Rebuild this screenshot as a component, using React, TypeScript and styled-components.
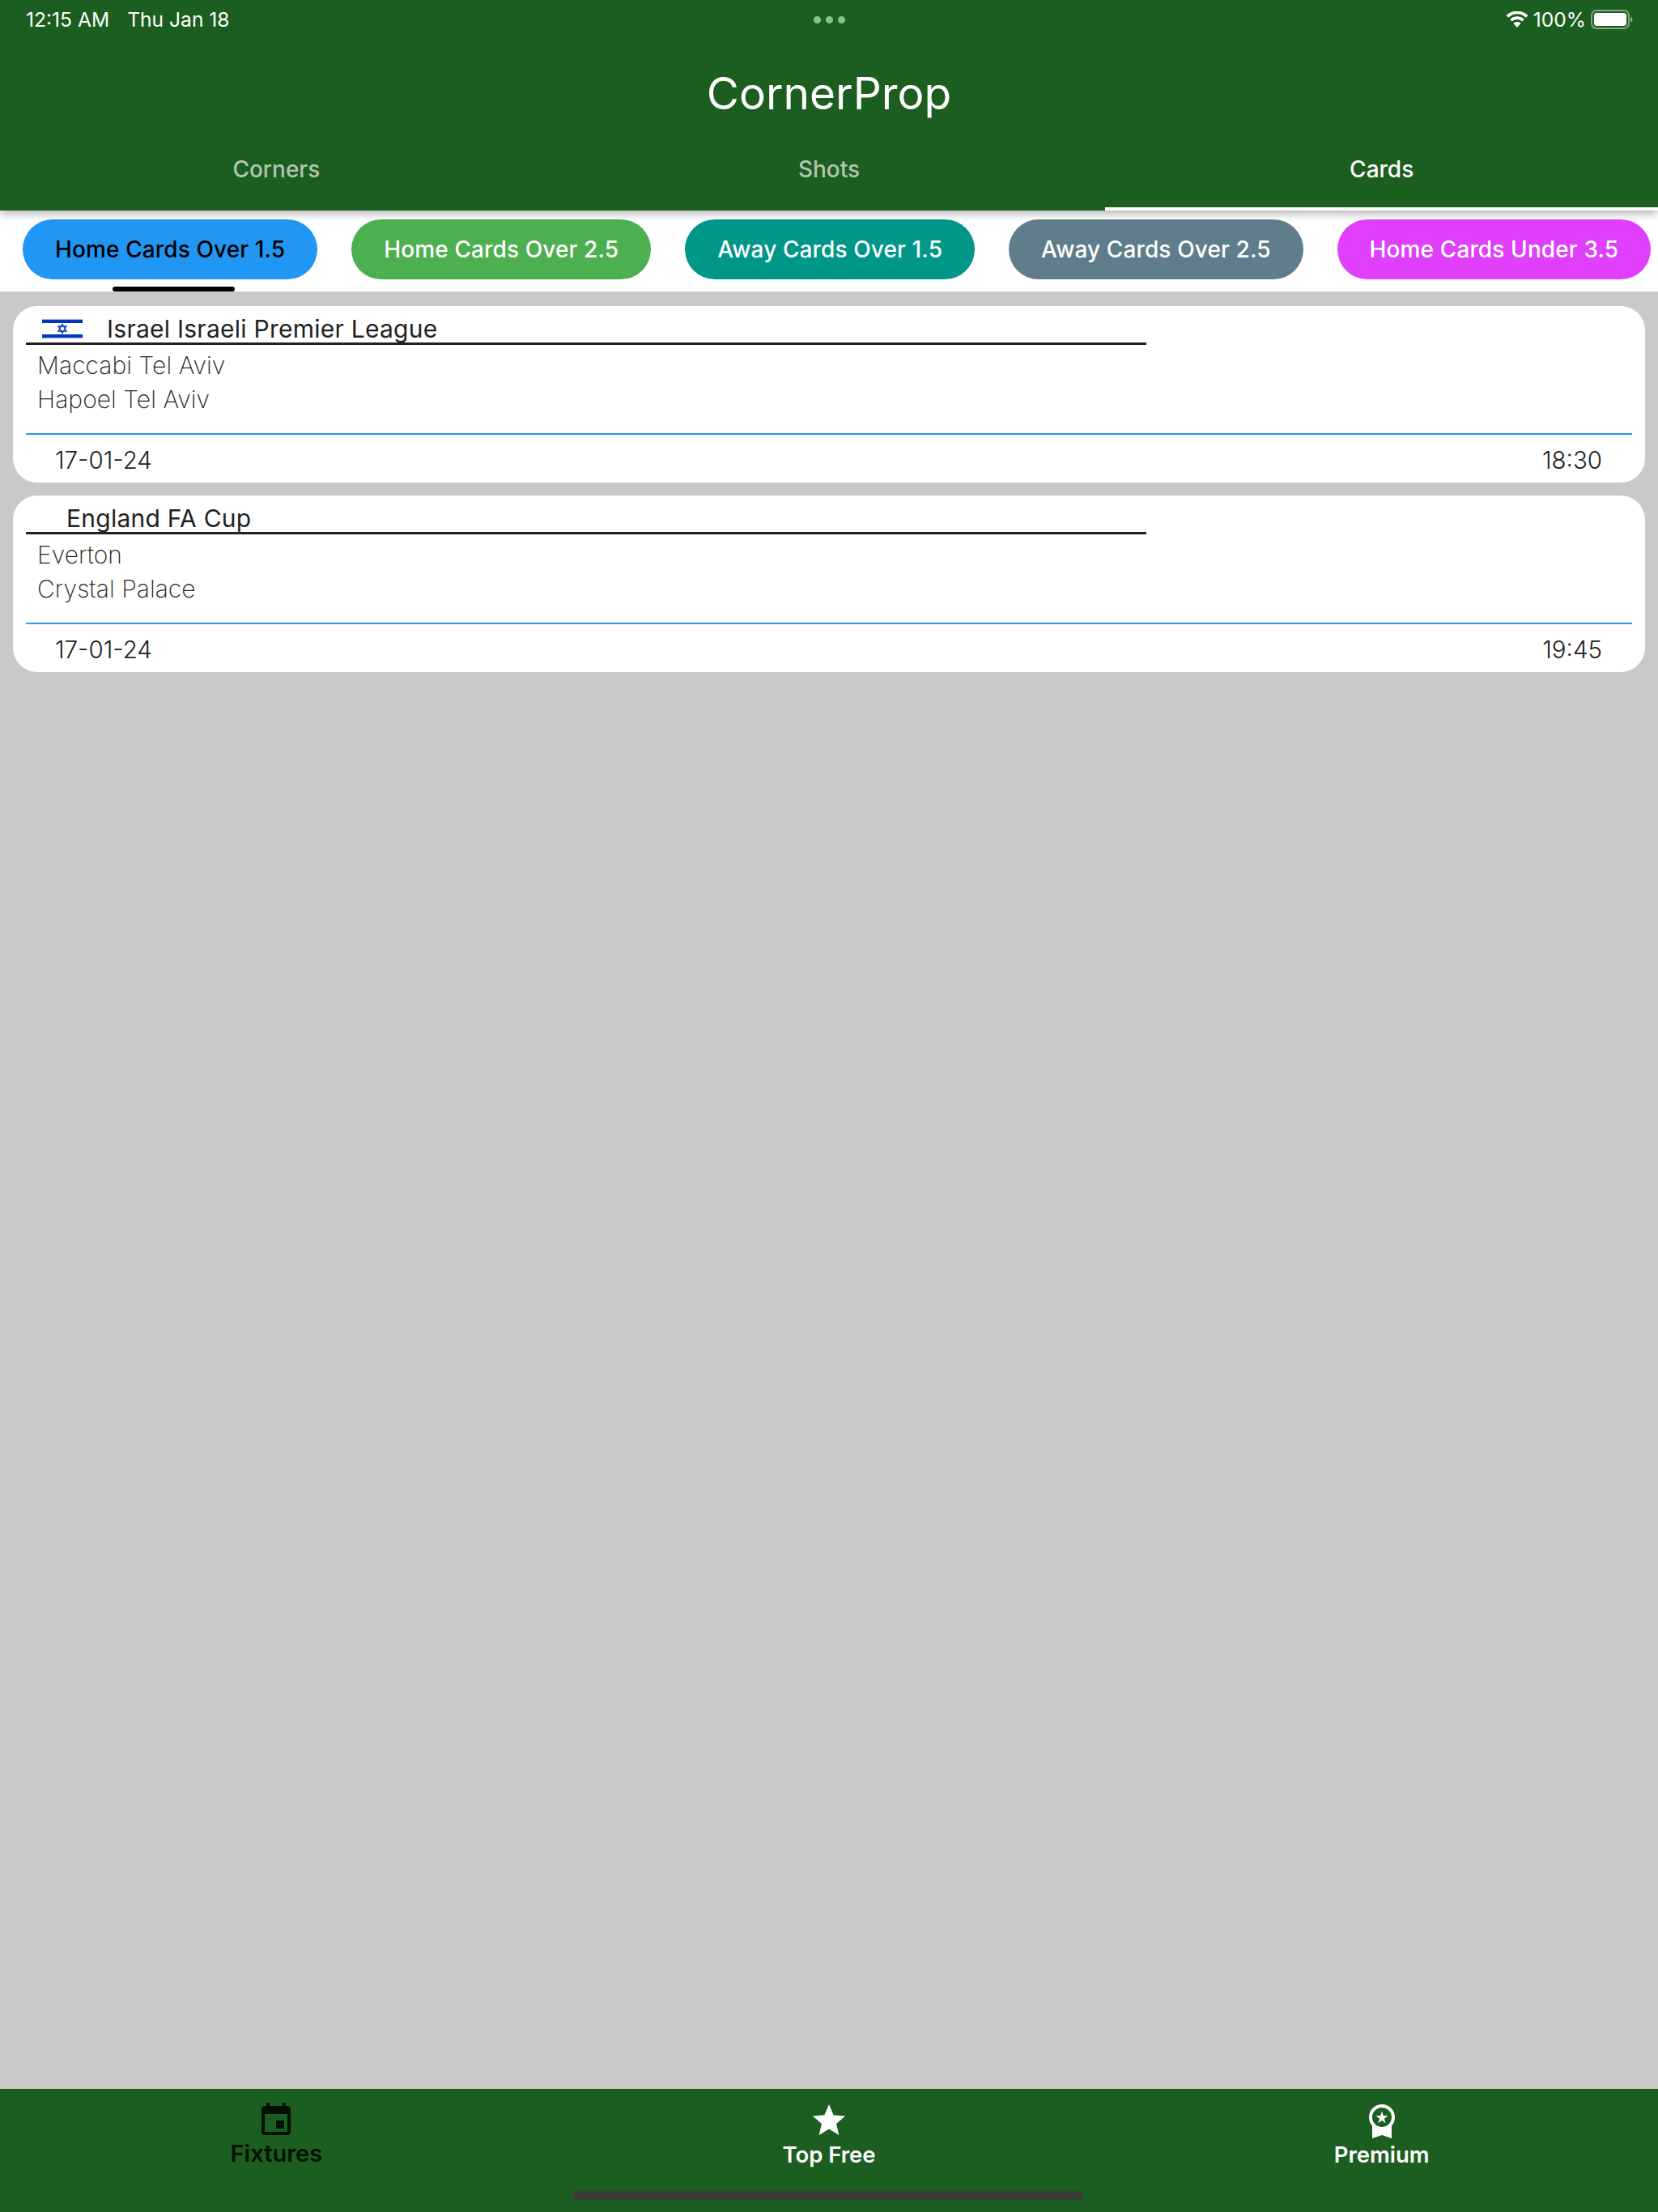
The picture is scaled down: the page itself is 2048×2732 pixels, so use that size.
import React from "react";
import styled, { createGlobalStyle } from "styled-components";
import { MdEvent, MdStar, MdWorkspacePremium } from "react-icons/md";

const GlobalStyle = createGlobalStyle`
  html, body { margin: 0; padding: 0; background: #c9c9c9; }
  * { box-sizing: border-box; }
  body { font-family: Inter, "Liberation Sans", sans-serif; }
`;

const Page = styled.div`
  width: 2048px;
  height: 2732px;
  display: flex;
  flex-direction: column;
  background: #c9c9c9;
  overflow: hidden;
`;

const Header = styled.header`
  height: 260px;
  flex: none;
  display: flex;
  flex-direction: column;
  background: #1b5e20;
  box-shadow: 0 4px 10px rgba(0, 0, 0, 0.3);
  position: relative;
  z-index: 2;
`;

const StatusBar = styled.div`
  height: 48px;
  flex: none;
  display: grid;
  grid-template-columns: 1fr auto 1fr;
  align-items: center;
  padding: 0 31px 0 32px;
  color: #fff;
  font-size: 24.6px;
`;

const StatusLeft = styled.div`
  display: flex;
  gap: 22px;
`;

const Dots = styled.div`
  display: flex;
  gap: 6px;
`;

const Dot = styled.span`
  width: 9px;
  height: 9px;
  border-radius: 50%;
  background: #86c38a;
`;

const StatusRight = styled.div`
  display: flex;
  justify-content: flex-end;
  align-items: center;
  gap: 6px;
`;

const Title = styled.h1`
  margin: 0;
  height: 134px;
  flex: none;
  display: flex;
  align-items: center;
  justify-content: center;
  font-size: 55px;
  font-weight: 400;
  color: #fff;
`;

const Tabs = styled.nav`
  flex: 1;
  display: grid;
  grid-template-columns: repeat(3, 1fr);
`;

const Tab = styled.div<{ $active?: boolean }>`
  display: flex;
  align-items: center;
  justify-content: center;
  font-size: 28px;
  font-weight: 500;
  padding-bottom: 20px;
  color: ${(p) => (p.$active ? "#fff" : "rgba(255,255,255,0.66)")};
  border-bottom: 4px solid ${(p) => (p.$active ? "#fff" : "transparent")};
`;

const ChipBar = styled.div`
  height: 100px;
  flex: none;
  background: #fff;
  display: flex;
  gap: 42px;
  padding: 11px 0 0 28px;
`;

const Chip = styled.div<{ $bg: string; $active?: boolean }>`
  position: relative;
  height: 74px;
  flex: none;
  display: flex;
  align-items: center;
  padding: 0 40px;
  border-radius: 37px;
  background: ${(p) => p.$bg};
  color: ${(p) => (p.$active ? "#000" : "#fff")};
  font-size: 28px;
  font-weight: 500;
  letter-spacing: 0.12px;
  white-space: nowrap;

  ${(p) =>
    p.$active &&
    `&::after {
      content: "";
      position: absolute;
      left: 111px;
      bottom: -15px;
      width: 151px;
      height: 6px;
      border-radius: 3px;
      background: #000;
    }`}
`;

const List = styled.main`
  flex: 1;
  display: flex;
  flex-direction: column;
  gap: 16px;
  padding: 18px 16px;
`;

const Card = styled.article`
  height: 218px;
  display: flex;
  flex-direction: column;
  padding: 0 16px;
  background: #fff;
  border-radius: 30px;
`;

const LeagueRow = styled.div`
  width: 1384px;
  height: 48px;
  flex: none;
  display: flex;
  align-items: center;
  padding-top: 10px;
  border-bottom: 3px solid #212121;
`;

const Flag = styled.svg`
  width: 50px;
  height: 24px;
  margin-left: 20px;
  flex: none;
`;

const League = styled.span<{ $indent: number }>`
  margin-left: ${(p) => p.$indent}px;
  font-size: 30px;
  letter-spacing: 0.25px;
  color: #212121;
`;

const Teams = styled.div`
  height: 111px;
  flex: none;
  padding: 4px 0 0 14px;
  border-bottom: 2px solid #2196f3;
`;

const Team = styled.div`
  height: 42px;
  line-height: 42px;
  font-size: 30px;
  font-weight: 250;
  letter-spacing: 0.05px;
  color: #212121;
`;

const Meta = styled.div`
  flex: 1;
  display: flex;
  align-items: center;
  justify-content: space-between;
  padding: 2px 37px 0 36px;
  font-size: 29.5px;
  font-weight: 300;
  color: #212121;
`;

const BottomBar = styled.footer`
  position: relative;
  height: 152px;
  flex: none;
  display: grid;
  grid-template-columns: repeat(3, 1fr);
  background: #1b5e20;
`;

const BottomItem = styled.div<{ $active?: boolean }>`
  display: flex;
  flex-direction: column;
  align-items: center;
  padding-top: 15px;
  color: ${(p) => (p.$active ? "#fff" : "#020f03")};
  font-size: ${(p) => (p.$active ? 27.5 : 29)}px;
  font-weight: 600;
  line-height: 32px;

  svg {
    width: 48px;
    height: 48px;
    flex: none;
    margin-bottom: ${(p) => (p.$active ? 2 : 1)}px;
  }
`;

const HomeIndicator = styled.div`
  position: absolute;
  left: 708px;
  bottom: 15px;
  width: 630px;
  height: 11px;
  border-radius: 6px;
  background: #3c3c3c;
`;

const chips = [
  { label: "Home Cards Over 1.5", bg: "#2196f3", active: true },
  { label: "Home Cards Over 2.5", bg: "#4caf50" },
  { label: "Away Cards Over 1.5", bg: "#009688" },
  { label: "Away Cards Over 2.5", bg: "#607d8b" },
  { label: "Home Cards Under 3.5", bg: "#e040fb" },
];

const matches = [
  { league: "Israel Israeli Premier League", flag: true, home: "Maccabi Tel Aviv", away: "Hapoel Tel Aviv", date: "17-01-24", time: "18:30" },
  { league: "England FA Cup", flag: false, home: "Everton", away: "Crystal Palace", date: "17-01-24", time: "19:45" },
];

const IsraelFlag = () => (
  <Flag viewBox="0 0 50 24">
    <rect width="50" height="24" fill="#fff" />
    <rect y="0" width="50" height="1" fill="#9db4e8" />
    <rect y="1" width="50" height="4" fill="#0038b8" />
    <rect y="19" width="50" height="4" fill="#0038b8" />
    <rect y="23" width="50" height="1" fill="#9db4e8" />
    <path d="M25 6.5l5 8.5H20zM25 17.5l-5-8.5h10z" fill="none" stroke="#0038b8" strokeWidth="1.3" />
  </Flag>
);

const WifiIcon = () => (
  <svg width="28" height="21" viewBox="0 0 28 21" fill="#fff">
    <path d="M14 3.2c4 0 7.7 1.6 10.4 4.2.2.2.5.2.7 0l1.9-2c.2-.2.2-.5 0-.7C23.600 1.400 19 -.4 14 -.4S4.400 1.400 1 4.700c-.2.2-.2.5 0 .7l1.900 2c.2.2.5.2.7 0C6.300 4.800 10 3.200 14 3.200z" />
    <path d="M14 10c2.200 0 4.300.8 5.900 2.300.2.2.5.2.7 0l1.900-2c.2-.2.2-.5 0-.7C20.200 7.500 17.200 6.300 14 6.300s-6.200 1.200-8.500 3.300c-.2.200-.2.500 0 .700l1.900 2c.2.200.5.200.7 0C9.700 10.800 11.800 10 14 10z" />
    <path d="M14 13c-1.700 0-3.200.6-4.300 1.600-.2.200-.2.500 0 .700l3.900 4.300c.2.200.6.200.8 0l3.900-4.300c.2-.2.2-.5 0-.7C17.200 13.600 15.700 13 14 13z" />
  </svg>
);

const BatteryIcon = () => (
  <svg width="52" height="24" viewBox="0 0 52 24">
    <rect x="1" y="1" width="46" height="22" rx="6" fill="none" stroke="#fff" strokeOpacity="0.45" strokeWidth="2" />
    <rect x="4" y="4" width="40" height="16" rx="3.500" fill="#fff" />
    <path d="M49 8.500c1.500.5 2.500 2 2.500 3.500s-1 3-2.500 3.500z" fill="#fff" fillOpacity="0.5" />
  </svg>
);

export default function App() {
  return (
    <Page>
      <GlobalStyle />
      <Header>
        <StatusBar>
          <StatusLeft>
            <span>12:15 AM</span>
            <span>Thu Jan 18</span>
          </StatusLeft>
          <Dots>
            <Dot />
            <Dot />
            <Dot />
          </Dots>
          <StatusRight>
            <WifiIcon />
            <span>100%</span>
            <BatteryIcon />
          </StatusRight>
        </StatusBar>
        <Title>CornerProp</Title>
        <Tabs>
          <Tab>Corners</Tab>
          <Tab>Shots</Tab>
          <Tab $active>Cards</Tab>
        </Tabs>
      </Header>
      <ChipBar>
        {chips.map((c) => (
          <Chip key={c.label} $bg={c.bg} $active={c.active}>
            {c.label}
          </Chip>
        ))}
      </ChipBar>
      <List>
        {matches.map((m) => (
          <Card key={m.league}>
            <LeagueRow>
              {m.flag && <IsraelFlag />}
              <League $indent={m.flag ? 30 : 50}>{m.league}</League>
            </LeagueRow>
            <Teams>
              <Team>{m.home}</Team>
              <Team>{m.away}</Team>
            </Teams>
            <Meta>
              <span>{m.date}</span>
              <span>{m.time}</span>
            </Meta>
          </Card>
        ))}
      </List>
      <BottomBar>
        <BottomItem>
          <MdEvent />
          Fixtures
        </BottomItem>
        <BottomItem $active>
          <MdStar />
          Top Free
        </BottomItem>
        <BottomItem $active>
          <MdWorkspacePremium />
          Premium
        </BottomItem>
        <HomeIndicator />
      </BottomBar>
    </Page>
  );
}
